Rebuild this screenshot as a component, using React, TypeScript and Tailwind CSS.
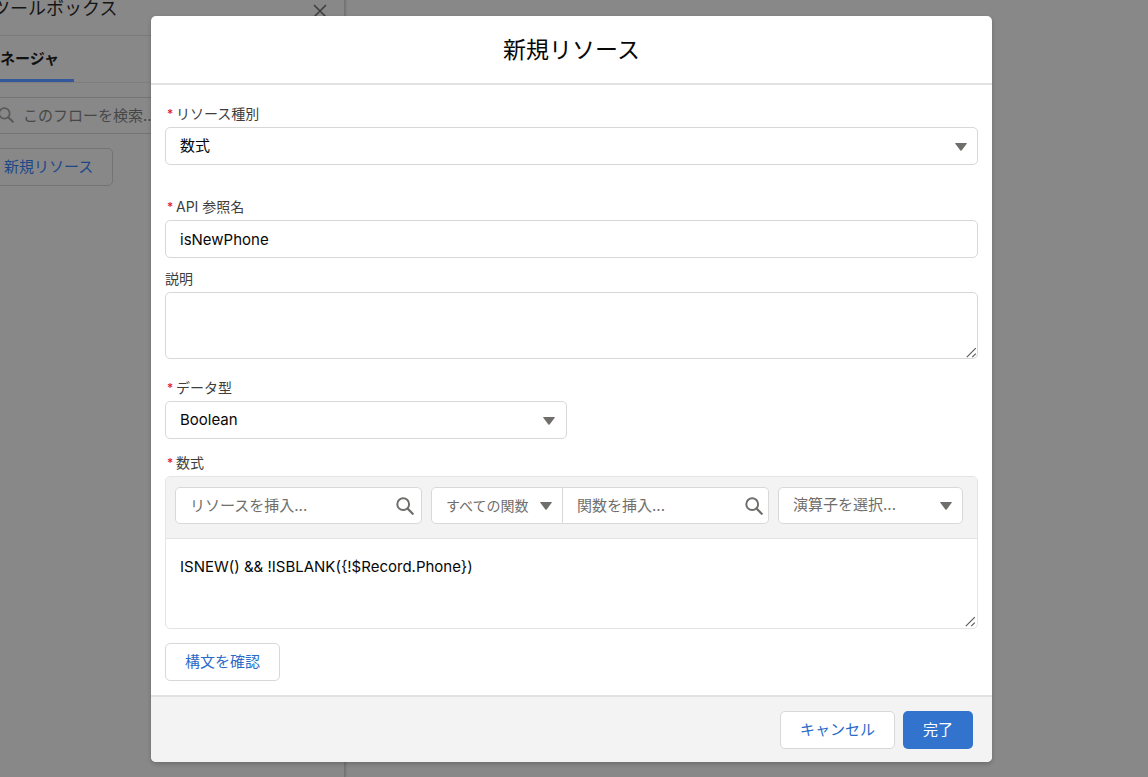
import { useState } from 'react';
import type { ReactNode } from 'react';

const fieldClass =
  'block w-full h-[38px] px-[14px] rounded-[5px] border border-[#d8d8d8] bg-white text-[15px] text-[#080707] outline-none';
const toolClass =
  'block w-full h-[37px] px-[14px] rounded-[5px] border border-[#d8d8d8] bg-white text-[15px] text-[#706e6b] placeholder:text-[#706e6b] placeholder:opacity-100 outline-none';
const buttonClass =
  'h-[38px] px-[19px] rounded-[5px] border border-[#d8d8d8] bg-white text-[15px] text-[#2a6bc8]';

function SearchIcon({ className }: { className?: string }) {
  return (
    <svg viewBox="0 0 18 18" fill="none" stroke="currentColor" className={className} aria-hidden="true">
      <circle cx="7.2" cy="7.2" r="5.9" strokeWidth="2" />
      <path d="M11.5 11.5l5.2 5.2" strokeWidth="2.3" strokeLinecap="round" />
    </svg>
  );
}

function Arrow({ className }: { className: string }) {
  return (
    <svg viewBox="0 0 12 8" fill="#706e6b" className={`absolute w-3 h-2 pointer-events-none ${className}`} aria-hidden="true">
      <path d="M.6 0h10.8q.8 0 .3.7L6.6 7.5q-.6.7-1.2 0L.3.7Q-.2 0 .6 0z" />
    </svg>
  );
}

function ResizeGrip() {
  return (
    <svg
      viewBox="0 0 11 11"
      fill="none"
      stroke="#5c5c5c"
      strokeWidth="1.2"
      className="absolute right-px bottom-px size-[11px] pointer-events-none"
      aria-hidden="true"
    >
      <path d="M.8 10.2l9-9M6.2 10.2l3.6-3.6" />
    </svg>
  );
}

function Label({ htmlFor, required, children }: { htmlFor: string; required?: boolean; children: ReactNode }) {
  return (
    <label htmlFor={htmlFor} className="flex w-fit mb-[3px] text-sm leading-5 text-[#3e3e3c]">
      {required && <span className="w-[11px] pl-[2px] text-xs leading-5 font-medium text-[#e0211b]">*</span>}
      {children}
    </label>
  );
}

export default function App() {
  const [name, setName] = useState('isNewPhone');
  const [description, setDescription] = useState('');
  const [formula, setFormula] = useState('ISNEW() && !ISBLANK({!$Record.Phone})');

  return (
    <div
      lang="ja"
      className="relative flex min-h-screen overflow-hidden bg-[#888888] font-[Inter,'Noto_Sans_CJK_JP',sans-serif]"
    >
      <aside className="-ml-5 -mt-5 w-[365px] border-r border-[#727272] shadow-[1px_0_2px_rgba(0,0,0,0.15)]">
        <div className="flex items-center justify-between h-14 pt-[2px] pl-3 pr-[17px] border-b border-[#7b7b7b]">
          <h2 className="text-lg leading-6 text-[#151515]">ツールボックス</h2>
          <button type="button" aria-label="閉じる" className="mt-1 text-[#3f3f3f]">
            <svg viewBox="0 0 14 14" fill="none" stroke="currentColor" strokeWidth="1.7" strokeLinecap="round" className="size-[14px]">
              <path d="M1.5 1.5l11 11M12.5 1.5l-11 11" />
            </svg>
          </button>
        </div>
        <div className="flex h-[47px] border-b border-[#7e7e7e]">
          <a href="#manager" className="w-[94px] pl-5 border-b-3 border-[#33589c] text-[15px] leading-[46px] font-bold text-[#101010] whitespace-nowrap">
            ネージャ
          </a>
        </div>
        <div className="relative mt-[14px]">
          <SearchIcon className="absolute left-[18px] top-[10px] size-4 text-[#5a5a5a]" />
          <input
            type="search"
            aria-label="フローを検索"
            placeholder="このフローを検索..."
            className="block w-[345px] h-[37px] pl-[42px] rounded-[5px] border border-[#747474] text-[15px] text-[#151515] placeholder:text-[#474747] placeholder:opacity-100 outline-none"
          />
        </div>
        <button type="button" className="mt-[14px] h-[38px] pl-[23px] pr-[19px] rounded-[5px] border border-[#747474] text-[15px] text-[#1d4788]">
          新規リソース
        </button>
      </aside>

      <div className="absolute inset-0 pt-4 pl-[151px] pr-[156px]">
        <section
          role="dialog"
          aria-labelledby="dialog-title"
          className="rounded-[5px] bg-white shadow-[0_2px_4px_rgba(0,0,0,0.2)]"
        >
          <header className="flex items-center justify-center h-[69px] border-b-2 border-[#e2e2e2]">
            <h1 id="dialog-title" className="text-[23px] leading-8 text-[#080707]">新規リソース</h1>
          </header>

          <div className="px-[14px] pt-[19px] pb-[14px]">
            <Label htmlFor="type" required>リソース種別</Label>
            <div className="relative">
              <select id="type" className={`${fieldClass} appearance-none`}>
                <option>数式</option>
              </select>
              <Arrow className="right-[11px] top-4" />
            </div>

            <div className="mt-8">
              <Label htmlFor="api-name" required>API 参照名</Label>
              <input id="api-name" value={name} onChange={(e) => setName(e.target.value)} className={fieldClass} />
            </div>

            <div className="mt-[11px]">
              <Label htmlFor="description">説明</Label>
              <div className="relative">
                <textarea
                  id="description"
                  value={description}
                  onChange={(e) => setDescription(e.target.value)}
                  className="block w-full h-[67px] px-[14px] py-2 rounded-[5px] border border-[#d8d8d8] text-[15px] resize-none outline-none"
                />
                <ResizeGrip />
              </div>
            </div>

            <div className="mt-[19px]">
              <Label htmlFor="data-type" required>データ型</Label>
              <div className="relative w-[calc(50%-5px)]">
                <select id="data-type" className={`${fieldClass} appearance-none`}>
                  <option>Boolean</option>
                </select>
                <Arrow className="right-3 top-4" />
              </div>
            </div>

            <div className="mt-[14px]">
              <Label htmlFor="formula" required>数式</Label>
              <div className="relative rounded-[5px] border border-[#e4e4e4] overflow-hidden">
                <div className="grid grid-cols-[247fr_338fr_185fr] gap-[9px] pt-[10px] pb-[14px] pl-[9px] pr-[14px] bg-[#f3f3f3] border-b border-[#e4e4e4]">
                  <div className="relative">
                    <input aria-label="リソースを挿入" placeholder="リソースを挿入..." className={toolClass} />
                    <SearchIcon className="absolute right-2 top-[10px] size-[18px] text-[#706e6b]" />
                  </div>
                  <div className="flex">
                    <div className="relative w-[132px] shrink-0">
                      <select
                        aria-label="関数の種類"
                        className="block w-full h-[37px] px-[14px] rounded-l-[5px] border border-[#d8d8d8] bg-white text-sm text-[#706e6b] appearance-none outline-none"
                      >
                        <option>すべての関数</option>
                      </select>
                      <Arrow className="right-[11px] top-[15px]" />
                    </div>
                    <div className="relative flex-1">
                      <input
                        aria-label="関数を挿入"
                        placeholder="関数を挿入..."
                        className="block w-full h-[37px] px-[14px] rounded-r-[5px] border border-l-0 border-[#d8d8d8] bg-white text-[15px] text-[#706e6b] placeholder:text-[#706e6b] placeholder:opacity-100 outline-none"
                      />
                      <SearchIcon className="absolute right-[6px] top-[10px] size-[18px] text-[#706e6b]" />
                    </div>
                  </div>
                  <div className="relative">
                    <select aria-label="演算子を選択" className={`${toolClass} appearance-none`}>
                      <option>演算子を選択...</option>
                    </select>
                    <Arrow className="right-[11px] top-[15px]" />
                  </div>
                </div>
                <textarea
                  id="formula"
                  value={formula}
                  onChange={(e) => setFormula(e.target.value)}
                  className="block w-full h-[89px] px-[14px] py-4 text-[15px] leading-6 text-[#080707] resize-none outline-none"
                />
                <ResizeGrip />
              </div>
            </div>

            <button type="button" className={`${buttonClass} mt-[14px]`}>構文を確認</button>
          </div>

          <footer className="flex justify-end gap-2 pt-[14px] pb-[13px] pr-[19px] rounded-b-[5px] border-t-2 border-[#e2e2e2] bg-[#f3f3f3]">
            <button type="button" className={buttonClass}>キャンセル</button>
            <button type="button" className="h-[38px] px-5 rounded-[5px] bg-[#3173cd] text-[15px] text-white">完了</button>
          </footer>
        </section>
      </div>
    </div>
  );
}
